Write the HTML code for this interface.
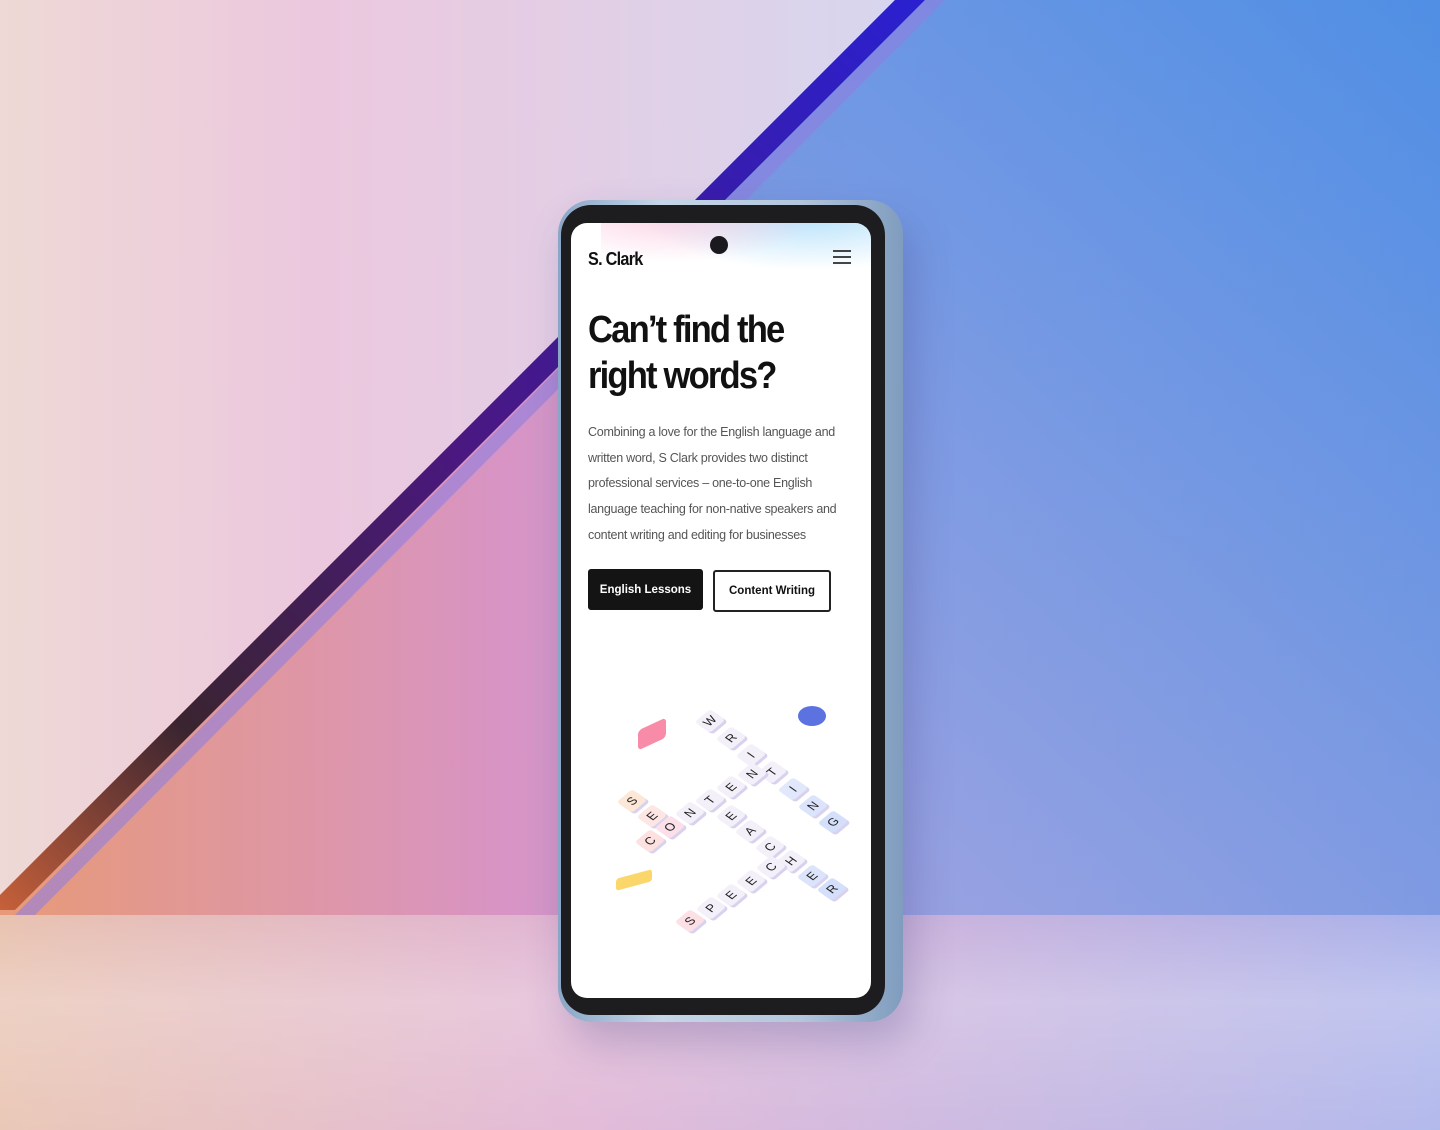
<!DOCTYPE html>
<html><head><meta charset="utf-8"><style>
*{margin:0;padding:0;box-sizing:border-box}
body{width:1440px;height:1130px;overflow:hidden;position:relative;font-family:"Liberation Sans",sans-serif;background:#c9b9e0}
svg.bg{position:absolute;left:0;top:0}
.phone{position:absolute;left:558px;top:200px;width:345px;height:822px;border-radius:34px;background:linear-gradient(90deg,#8aa6c6,#c6d6e8 30%,#b4c6dc 70%,#7f9cbe);box-shadow:10px 20px 40px rgba(60,50,120,.25)}
.bezel{position:absolute;left:561px;top:205px;width:324px;height:810px;border-radius:30px;background:#1d1d20}
.screen{position:absolute;left:571px;top:223px;width:300px;height:775px;border-radius:16px;background:#fff;overflow:hidden}
.glow{position:absolute;left:30px;top:-70px;width:280px;height:130px;background:radial-gradient(ellipse at 25% 45%,rgba(250,190,215,.7),transparent 50%),radial-gradient(ellipse at 75% 45%,rgba(170,220,250,.9),transparent 58%)}
.cam{position:absolute;left:139px;top:13px;width:18px;height:18px;border-radius:50%;background:#1a1a1e}
.logo{position:absolute;left:17px;top:26px;font-weight:bold;font-size:18px;letter-spacing:-.8px;color:#111;transform:scaleX(.9);transform-origin:left}
.menu{position:absolute;left:262px;top:27px;width:18px}
.menu i{display:block;height:2px;background:#444;margin-bottom:4px}
h1{position:absolute;left:17px;top:84px;font-size:38px;line-height:46px;letter-spacing:-2px;color:#111;font-weight:bold;transform:scaleX(.91);transform-origin:left;white-space:nowrap}
p{position:absolute;left:17px;top:196px;width:290px;font-size:13.2px;line-height:25.7px;color:#555;letter-spacing:-.3px;transform:scaleX(.95);transform-origin:left}
.b1{position:absolute;left:17px;top:346px;width:115px;height:41px;background:#141414;color:#fff;border-radius:3px;font-size:11.5px;font-weight:bold;display:flex;align-items:center;justify-content:center}
.b2{position:absolute;left:142px;top:347px;width:118px;height:42px;border:2px solid #222;color:#111;border-radius:3px;font-size:11.5px;font-weight:bold;display:flex;align-items:center;justify-content:center}
.t{position:absolute;width:20px;height:18px;border-radius:3px;background:#f4f0fa;box-shadow:0 3px 0 #d9d2ee;font-size:12px;color:#222;display:flex;align-items:center;justify-content:center;transform:rotate(-40deg) skewX(15deg)}
</style></head><body>
<svg class="bg" width="1440" height="1130">
<defs>
<linearGradient id="g1" x1="0" y1="0" x2="1" y2="0"><stop offset="0" stop-color="#eed9d6"/><stop offset=".35" stop-color="#ecc8de"/><stop offset="1" stop-color="#d7d6ee"/></linearGradient>
<linearGradient id="g2" x1="0" y1="0" x2="1" y2="0"><stop offset="0" stop-color="#e79a78"/><stop offset=".35" stop-color="#d894c4"/><stop offset=".6" stop-color="#b8a8e0"/><stop offset="1" stop-color="#5d8ee0"/></linearGradient>
<linearGradient id="g3" x1="0" y1="0" x2="0" y2="1"><stop offset="0" stop-color="#4a8fe6"/><stop offset="1" stop-color="#8fa0e2"/></linearGradient>
<linearGradient id="fl" x1="0" y1="0" x2="1" y2="0"><stop offset="0" stop-color="#e8c2b0"/><stop offset=".4" stop-color="#e0b4d4"/><stop offset="1" stop-color="#aab2ea"/></linearGradient>
<linearGradient id="fv" x1="0" y1="0" x2="0" y2="1"><stop offset="0" stop-color="#fff" stop-opacity="0"/><stop offset=".4" stop-color="#fff" stop-opacity=".25"/><stop offset="1" stop-color="#fff" stop-opacity=".1"/></linearGradient>
<linearGradient id="st" x1="0" y1="1" x2="1" y2="0"><stop offset="0" stop-color="#c6603a"/><stop offset=".2" stop-color="#3a2430"/><stop offset=".5" stop-color="#4a1880"/><stop offset="1" stop-color="#2a20d0"/></linearGradient>
</defs>
<rect width="1440" height="1130" fill="url(#g2)"/>
<rect x="700" y="0" width="740" height="920" fill="url(#g3)" opacity=".7"/>
<polygon points="0,0 895,0 0,895" fill="url(#g1)"/>
<polygon points="895,0 925,0 15,910 0,910 0,895" fill="url(#st)"/>
<polygon points="925,0 945,0 35,915 15,915" fill="#8f7fe0" opacity=".6"/>
<rect x="0" y="915" width="1440" height="215" fill="url(#fl)"/>
<rect x="0" y="915" width="1440" height="215" fill="url(#fv)"/>
</svg>
<div class="phone"></div>
<div class="bezel"></div>
<div class="screen">
<div class="glow"></div>
<div class="cam"></div>
<div class="logo">S. Clark</div>
<div class="menu"><i></i><i></i><i></i></div>
<h1>Can’t find the<br>right words?</h1>
<p>Combining a love for the English language and written word, S Clark provides two distinct professional services – one-to-one English language teaching for non-native speakers and content writing and editing for businesses</p>
<div class="b1">English Lessons</div>
<div class="b2">Content Writing</div>
</div>
<div style="position:absolute;left:0;top:0">
<div class="t" style="left:700px;top:712px">W</div>
<div class="t" style="left:721px;top:729px">R</div>
<div class="t" style="left:741px;top:746px">I</div>
<div class="t" style="left:762px;top:763px">T</div>
<div class="t" style="left:783px;top:780px;background:#e2e8fb">I</div>
<div class="t" style="left:803px;top:797px;background:#dce4fb">N</div>
<div class="t" style="left:823px;top:813px;background:#d4e0fb">G</div>
<div class="t" style="left:622px;top:792px;background:#fde8d8">S</div>
<div class="t" style="left:642px;top:807px;background:#fde6e4">E</div>
<div class="t" style="left:640px;top:832px;background:#fde0e0">C</div>
<div class="t" style="left:660px;top:818px;background:#fbe0ea">O</div>
<div class="t" style="left:680px;top:804px">N</div>
<div class="t" style="left:700px;top:791px">T</div>
<div class="t" style="left:721px;top:778px">E</div>
<div class="t" style="left:742px;top:765px">N</div>
<div class="t" style="left:721px;top:807px">E</div>
<div class="t" style="left:740px;top:822px">A</div>
<div class="t" style="left:760px;top:838px">C</div>
<div class="t" style="left:781px;top:852px">H</div>
<div class="t" style="left:802px;top:867px;background:#dce4fb">E</div>
<div class="t" style="left:822px;top:880px;background:#d4e0fb">R</div>
<div class="t" style="left:680px;top:912px;background:#fde0e6">S</div>
<div class="t" style="left:701px;top:899px">P</div>
<div class="t" style="left:721px;top:886px">E</div>
<div class="t" style="left:741px;top:872px">E</div>
<div class="t" style="left:761px;top:858px">C</div>
<div style="position:absolute;left:798px;top:706px;width:28px;height:20px;border-radius:50%;background:#5b72e0"></div>
<div style="position:absolute;left:638px;top:724px;width:28px;height:20px;border-radius:4px;background:#f88ca8;transform:skewY(-25deg)"></div>
<div style="position:absolute;left:616px;top:874px;width:36px;height:12px;background:#fbd66a;border-radius:3px;transform:skewY(-15deg)"></div>
</div>
</body></html>
